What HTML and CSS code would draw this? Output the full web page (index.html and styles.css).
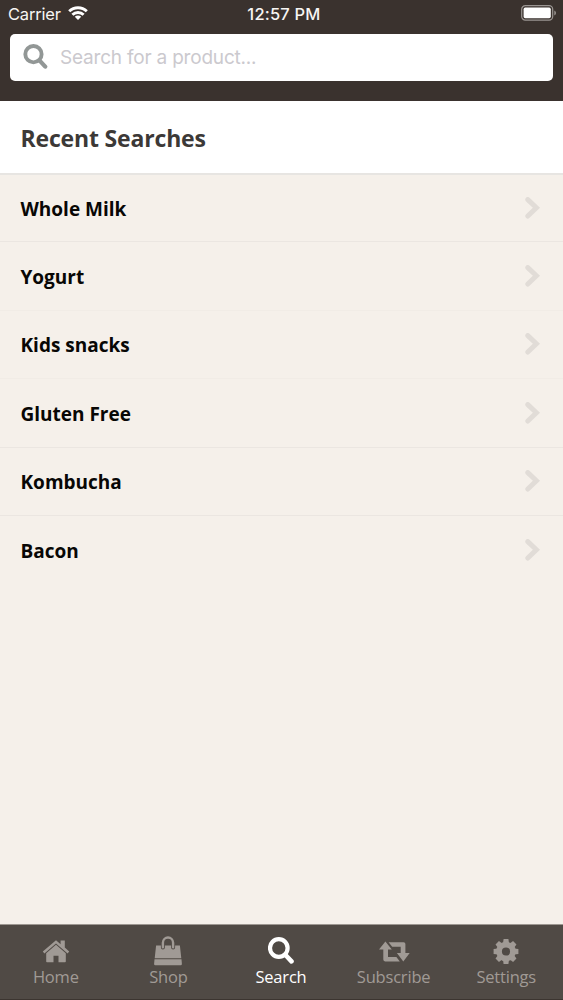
FILE: index.html
```html
<!DOCTYPE html>
<html lang="en">
<head>
<meta charset="utf-8">
<title>Search</title>
<link rel="stylesheet" href="styles.css">
</head>
<body>
<svg class="defs" width="0" height="0" aria-hidden="true">
  <symbol id="magnifier" viewBox="0 0 26 27"><circle cx="10.8" cy="11" r="8.8" fill="none" stroke="currentColor" stroke-width="4.2"/><path d="M17.5 18l6 6.4" stroke="currentColor" stroke-width="4.6" stroke-linecap="round"/></symbol>
  <symbol id="chevron" viewBox="0 0 16 22"><path d="M2.8 2.6l8.6 8.2-8.6 8.2" fill="none" stroke="currentColor" stroke-width="5" stroke-linecap="round"/></symbol>
</svg>
<div class="app">
  <header class="header">
    <div class="status">
      <div class="network"><span class="carrier">Carrier</span>
        <svg class="wifi" viewBox="0 0 20 14"><g fill="none" stroke="currentColor" stroke-width="2.9"><path d="M1.2 5.3a12.6 12.6 0 0 1 17.6 0"/><path d="M4.4 8.8a7.9 7.9 0 0 1 11.2 0"/></g><path d="M10 14L6.8 10.8a4.5 4.5 0 0 1 6.4 0z" fill="currentColor"/></svg>
      </div>
      <span class="clock">12:57 PM</span>
      <svg class="battery" viewBox="0 0 36 16"><rect x=".7" y=".7" width="31" height="14.4" rx="3.6" fill="none" stroke="#9a9592" stroke-width="1.2"/><rect x="2.6" y="2.6" width="27.2" height="10.6" rx="1.6" fill="#fff"/><path d="M33.3 5.4q1.7.6 1.7 2.5t-1.7 2.5z" fill="#9a9592"/></svg>
    </div>
    <div class="search-box">
      <svg class="search-icon"><use href="#magnifier"/></svg>
      <span class="placeholder">Search for a product...</span>
    </div>
  </header>
  <h1 class="section-title"><span>Recent Searches</span></h1>
  <ul class="searches">
    <li class="row"><span>Whole Milk</span><svg class="chevron"><use href="#chevron"/></svg></li>
    <li class="row faint"><span>Yogurt</span><svg class="chevron"><use href="#chevron"/></svg></li>
    <li class="row faint"><span>Kids snacks</span><svg class="chevron"><use href="#chevron"/></svg></li>
    <li class="row"><span>Gluten Free</span><svg class="chevron"><use href="#chevron"/></svg></li>
    <li class="row"><span>Kombucha</span><svg class="chevron"><use href="#chevron"/></svg></li>
    <li class="row"><span>Bacon</span><svg class="chevron"><use href="#chevron"/></svg></li>
  </ul>
  <nav class="tabs">
    <a class="tab"><svg class="tab-icon" viewBox="0 0 30 30"><g fill="currentColor"><path d="M1.8 15.6L15 4.2l4.6 4V4.500h4.200v7.100l4.400 4-1.6 1.900L15 7.500 3.400 17.500z"/><path d="M5.200 17.300L15 8.800l9.800 8.500v8.200q0 .8-.8.8h-6.500v-6.500h-5v6.500H6q-.8 0-.8-.8z"/></g></svg><span>Home</span></a>
    <a class="tab"><svg class="tab-icon" viewBox="0 0 30 30"><g fill="currentColor"><path d="M3.1 9.5h4.8v1.9a2 2 0 0 0 4 0V9.5h6.2v1.9a2 2 0 0 0 4 0V9.5h4.8l1.4 12.8H1.7z"/><path d="M1.500 23.300h27l.4 4.700q0 1.200-1.200 1.200H2.300q-1.200 0-1.200-1.200z"/></g><path d="M9.900 11.300V6.800a5.100 5.300 0 0 1 10.200 0v4.500" fill="none" stroke="currentColor" stroke-width="2.400" stroke-linecap="round"/></svg><span>Shop</span></a>
    <a class="tab active"><svg class="tab-icon search-tab"><use href="#magnifier"/></svg><span>Search</span></a>
    <a class="tab"><svg class="tab-icon" viewBox="0 0 30 30"><g fill="currentColor"><path d="M6.400 5.600L12.800 13.600H9v7.300h8.400l3.400 4.500H6.100q-1.800 0-1.800-1.800v-10H0z"/><path d="M9.600 6.200h15q1.800 0 1.800 1.800v9h4.300l-6.400 8.400L17.900 17h3.800v-6.300h-8.500z"/></g></svg><span>Subscribe</span></a>
    <a class="tab"><svg class="tab-icon" viewBox="0 0 30 30"><g fill="currentColor"><path fill-rule="evenodd" d="M15 5.700a9.800 9.800 0 1 0 0 19.600 9.800 9.800 0 0 0 0-19.600zm0 5.700a4.100 4.100 0 1 1 0 8.200 4.100 4.100 0 0 1 0-8.200z"/><path id="tooth" d="M11.900 8l.7-4.900h4.800l.7 4.900z"/><use href="#tooth" transform="rotate(45 15 15.5)"/><use href="#tooth" transform="rotate(90 15 15.5)"/><use href="#tooth" transform="rotate(135 15 15.5)"/><use href="#tooth" transform="rotate(180 15 15.5)"/><use href="#tooth" transform="rotate(225 15 15.5)"/><use href="#tooth" transform="rotate(270 15 15.5)"/><use href="#tooth" transform="rotate(315 15 15.5)"/></g></svg><span>Settings</span></a>
  </nav>
</div>
</body>
</html>
```
FILE: styles.css
```css
* { box-sizing: border-box; }
body { margin: 0; background: #f5f0ea; }
.defs { display: none; }
.app { width: 563px; height: 1000px; display: flex; flex-direction: column; overflow: hidden; font-family: "Open Sans", sans-serif; }
.header { height: 101px; flex: none; background: #3a322e; padding: 0 10px; }
.status { height: 34px; padding: 4px 0 10px; display: grid; grid-template-columns: 1fr auto 1fr; align-items: center; color: #f7f5f3; font: 16.5px/20px Inter, sans-serif; margin: 0 -4px 0 -2px; }
.network { display: flex; align-items: center; gap: 7px; }
.carrier { font-size: 16.5px; letter-spacing: -.2px; }
.wifi { width: 20px; height: 14px; margin-top: -2px; color: #fff; }
.clock { font-size: 16.5px; font-weight: 500; letter-spacing: .2px; padding-left: 3px; }
.battery { width: 36px; height: 16px; justify-self: end; margin-top: -2px; }
.search-box { height: 47px; background: #fff; border-radius: 5px; display: flex; align-items: center; padding: 0 13px; gap: 12px; }
.search-icon { width: 25px; height: 25px; color: #929796; margin-top: -2px; }
.placeholder { font: 19px/24px Inter, sans-serif; letter-spacing: -.2px; color: #cbc9ce; }
.section-title { margin: 0; height: 74px; flex: none; background: #fff; border-bottom: 2px solid #e7e5e2; padding: 2px 20.5px 0; display: flex; align-items: center; color: #3c3937; font-size: 23px; letter-spacing: -.17px; line-height: 32px; font-weight: 700; }
.searches { margin: 0; padding: 0; list-style: none; flex: 1; background: #f5f0ea; }
.row { height: 68.4px; border-bottom: 1px solid #ebe6e1; padding: 0 22px 0 20.5px; display: flex; align-items: center; justify-content: space-between; font-size: 19px; line-height: 26px; font-weight: 700; color: #080705; }
.row span { padding-top: 2px; }
.row:first-child { height: 67.4px; }
.row.faint { border-bottom-color: #f1ece6; }
.row:last-child { border-bottom: 0; }
.chevron { width: 16px; height: 22px; color: #e1dcd7; }
.tabs { height: 76px; flex: none; background: #504a45; border-top: 1px solid #9d9791; border-bottom: 1px solid #3c3530; display: grid; grid-template-columns: repeat(5, 1fr); }
.tab { display: flex; flex-direction: column; align-items: center; padding: 11px 1px 0 0; color: #a09a95; font-size: 17px; line-height: 22px; }
.tab span { font-size: 16.5px; letter-spacing: -.2px; }
.tab-icon { width: 30px; height: 30px; overflow: visible; }
.search-tab { width: 26px; height: 27px; margin: 1px 0 2px; }
.active { color: #fff; }
```
